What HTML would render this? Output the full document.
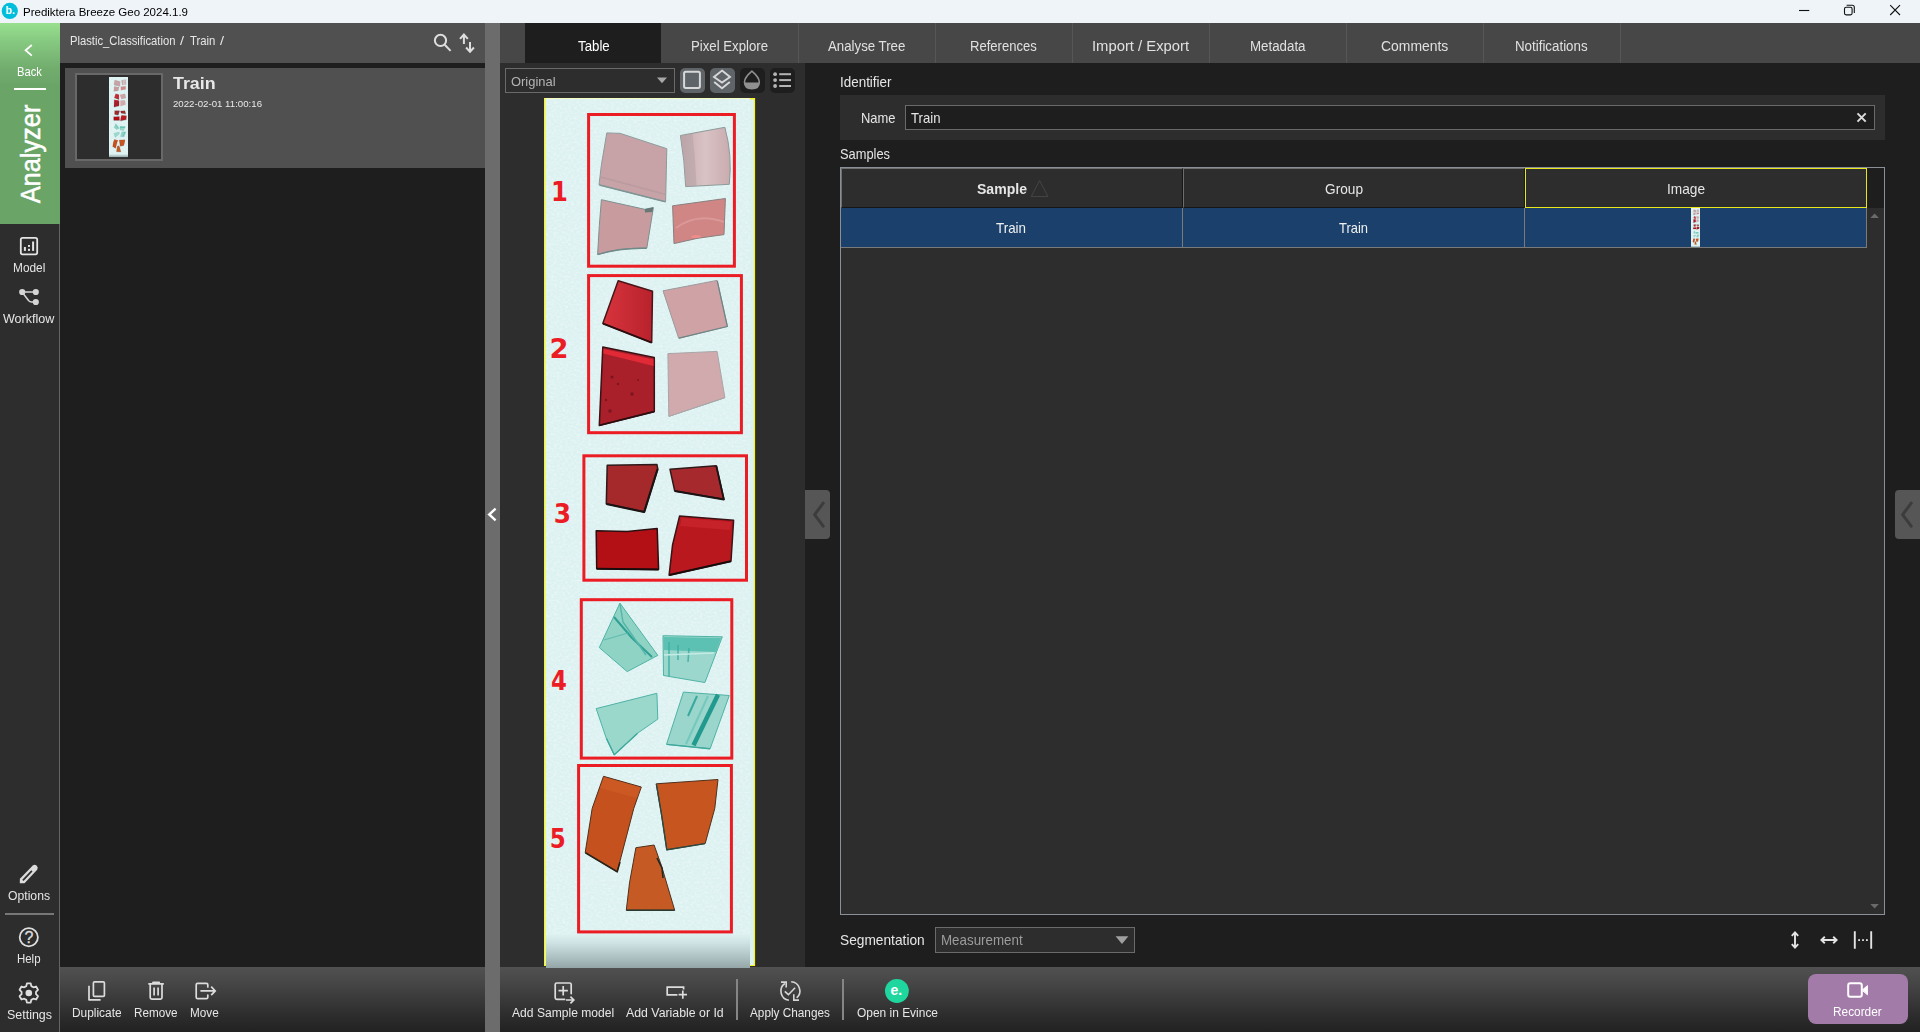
<!DOCTYPE html>
<html><head><meta charset="utf-8"><title>Prediktera Breeze Geo 2024.1.9</title>
<style>
*{box-sizing:border-box;margin:0;padding:0}
html,body{width:1920px;height:1032px;overflow:hidden;background:#1e1e1e;font-family:"Liberation Sans","DejaVu Sans",sans-serif;font-size:13px;color:#e6e6e6}
.a{position:absolute}
.tx{position:absolute;white-space:pre;transform-origin:0 50%;display:block}
svg{position:absolute;overflow:visible}
#titlebar{left:0;top:0;width:1920px;height:23px;background:#eff4f9}
#sidebar{left:0;top:23px;width:60px;height:1009px;background:#2d2d2d;border-right:1px solid #646464}
#green{left:0;top:23px;width:60px;height:201px;background:linear-gradient(#98e08f 0,#86c981 18px,#72ad6e 45px,#6ba467 62px,#6ba467 100%)}
#leftpanel{left:60px;top:23px;width:425px;height:1009px;background:#1e1e1e}
#crumb{left:60px;top:23px;width:425px;height:40px;background:#505050}
#item{left:65px;top:68px;width:420px;height:100px;background:#505050}
#thumb{left:75px;top:73px;width:88px;height:88px;background:#2d2d2d;border:2px solid #686868}
.tbar{background:linear-gradient(#515151 0,#464646 25%,#393939 50%,#2b2b2b 78%,#222 100%)}
#lbar{left:60px;top:967px;width:425px;height:65px}
#split{left:485px;top:23px;width:15px;height:1009px;background:#6c6c6c}
#tabs{left:500px;top:23px;width:1420px;height:40px;background:#474747}
.tabsep{top:23px;width:1px;height:40px;background:#565656}
#tabact{left:525px;top:23px;width:136px;height:40px;background:#1e1e1e}
#imgpane{left:500px;top:63px;width:305px;height:904px;background:#2d2d2d}
#right{left:805px;top:63px;width:1115px;height:904px;background:#1e1e1e}
#bbar{left:500px;top:967px;width:1420px;height:65px}
.dd{border:1px solid #6a6a6a;background:#2d2d2d}
.ibtn{top:68px;width:25px;height:25px;border-radius:5px}
#identbox{left:840px;top:95px;width:1045px;height:45px;background:#2d2d2d}
#nameinp{left:905px;top:105px;width:970px;height:25px;background:#1e1e1e;border:1px solid #6a6a6a}
#table{left:840px;top:167px;width:1045px;height:748px;background:#2d2d2d;border:1px solid #8a8f98}
.hcell{top:168px;height:40px;background:#2d2d2d;border-top:1px solid #6e6e6e;border-left:1px solid #6e6e6e;border-right:1px solid #161616;border-bottom:1px solid #161616}
.rcell{top:208px;height:40px;background:#1b406b;border-right:1px solid #7a7a7a;border-bottom:1px solid #7a7a7a}
#recorder{left:1808px;top:974px;width:100px;height:50px;border-radius:8px;background:#a27ba8}
.handle{background:#565656;border-radius:3px}
</style></head><body>
<div class="a" id="titlebar"></div>
<div class="a" id="sidebar"></div>
<div class="a" id="green"></div>
<div class="a" id="leftpanel"></div>
<div class="a" id="crumb"></div>
<div class="a" id="item"></div>
<div class="a" id="thumb"></div>
<div class="a tbar" id="lbar"></div>
<div class="a" id="split"></div>
<div class="a" id="tabs"></div>
<div class="a" id="tabact"></div>
<div class="a tabsep" style="left:798px"></div><div class="a tabsep" style="left:935px"></div><div class="a tabsep" style="left:1072px"></div><div class="a tabsep" style="left:1209px"></div><div class="a tabsep" style="left:1346px"></div><div class="a tabsep" style="left:1483px"></div><div class="a tabsep" style="left:1620px"></div>
<div class="a" id="imgpane"></div>
<div class="a" id="right"></div>
<div class="a tbar" id="bbar"></div>
<!-- image pane controls -->
<div class="a dd" style="left:505px;top:68px;width:170px;height:25px"></div>
<div class="a ibtn" style="left:680px;background:#5f6468"></div>
<div class="a ibtn" style="left:710px;background:#5f6468"></div>
<div class="a ibtn" style="left:740px;background:#1e1e1e"></div>
<div class="a ibtn" style="left:770px;background:#1e1e1e"></div>
<!-- right pane -->
<div class="a" id="identbox"></div>
<div class="a" id="nameinp"></div>
<div class="a" id="table"></div>
<div class="a" style="left:1867px;top:168px;width:17px;height:40px;background:#1e1e1e"></div>
<div class="a hcell" style="left:841px;width:342px"></div>
<div class="a hcell" style="left:1183px;width:342px"></div>
<div class="a" style="left:1525px;top:168px;width:342px;height:40px;background:#2d2d2d;border:1px solid #e6e61a"></div>
<div class="a rcell" style="left:841px;width:342px"></div>
<div class="a rcell" style="left:1183px;width:342px"></div>
<div class="a rcell" style="left:1525px;width:342px"></div>
<div class="a dd" style="left:935px;top:927px;width:200px;height:26px;background:#2d2d2d"></div>
<div class="a" id="recorder"></div>
<div class="a handle" style="left:805px;top:490px;width:25px;height:49px;border-radius:0 4px 4px 0"></div>
<div class="a handle" style="left:1895px;top:490px;width:25px;height:49px;border-radius:4px 0 0 4px"></div>
<!-- toolbar separators -->
<div class="a" style="left:736px;top:979px;width:2px;height:41px;background:#858585"></div>
<div class="a" style="left:842px;top:979px;width:2px;height:41px;background:#858585"></div>
<!-- sidebar lines -->
<div class="a" style="left:14px;top:88px;width:32px;height:2px;background:#fff"></div>
<div class="a" style="left:5px;top:913px;width:49px;height:2px;background:#777"></div>
<svg style="left:0;top:0" width="1920" height="1032" viewBox="0 0 1920 1032" fill="none" stroke-linecap="round" stroke-linejoin="round">
<!-- title bar -->
<circle cx="9.8" cy="10.9" r="8.1" fill="#00bedb"/>
<text x="5.6" y="14.2" font-family="'Liberation Sans',sans-serif" font-weight="700" font-size="10.5" fill="#fff" stroke="none">b.</text>
<g stroke="#111" stroke-width="1.1" stroke-linecap="butt">
<path d="M1799 10.5H1809.3"/>
<rect x="1844.5" y="7.3" width="7.6" height="7.6" rx="1.6"/>
<path d="M1846.6 5.2H1852.3Q1854.3 5.2 1854.3 7.2V12.9"/>
<path d="M1890.2 5.2L1900 15M1900 5.2L1890.2 15"/>
</g>
<!-- sidebar: back chevron -->
<path d="M31.8 45L25.6 50.3L31.8 55.6" stroke="#fff" stroke-width="1.8" stroke-linecap="butt" stroke-linejoin="miter"/>
<!-- model icon -->
<g stroke="#e4e4e4" stroke-width="1.8">
<rect x="20.8" y="237.9" width="16.4" height="16.4" rx="1.8"/>
</g>
<g fill="#e4e4e4" stroke="none">
<rect x="23.9" y="247" width="2" height="3.9"/><rect x="28" y="245" width="2" height="1.9"/><rect x="28" y="248.8" width="2" height="2.1"/><rect x="32.1" y="241.5" width="2" height="9.4"/>
</g>
<!-- workflow icon -->
<g stroke="#d4d4d4" stroke-width="1.5"><path d="M22 292H35.8M22 292L28.5 300.5Q29.8 302 31.5 302H35.8"/></g>
<g fill="#d4d4d4" stroke="none"><circle cx="22.2" cy="292" r="3.1"/><circle cx="35.8" cy="292" r="3.1"/><circle cx="35.8" cy="302" r="3.1"/></g>
<!-- options pencil -->
<path d="M19.8 883.2L19.9 878.8L32.8 865.5A3.1 3.1 0 0 1 37.2 869.7L24.5 883.2Z" fill="#dcdcdc" stroke="none"/>
<path d="M22.9 880.3L31.9 870.9" stroke="#2d2d2d" stroke-width="1.7" stroke-linecap="butt"/>
<!-- help -->
<circle cx="28.8" cy="937.3" r="9.1" stroke="#dedede" stroke-width="1.8"/>
<text x="28.9" y="942.9" text-anchor="middle" font-family="'Liberation Sans',sans-serif" font-weight="400" font-size="16" fill="#dedede" stroke="#dedede" stroke-width="0.3">?</text>
<!-- settings gear -->
<g transform="translate(28.8 993)">
<path stroke="#dedede" stroke-width="1.8" d="M-1.9 -9.6H1.9L2.5 -6.9L4.6 -5.7L7.3 -6.5L9.2 -3.2L7.2 -1.2V1.2L9.2 3.2L7.3 6.5L4.6 5.7L2.5 6.9L1.9 9.6H-1.9L-2.5 6.9L-4.6 5.7L-7.3 6.5L-9.2 3.2L-7.2 1.2V-1.2L-9.2 -3.2L-7.3 -6.5L-4.6 -5.7L-2.5 -6.9Z"/>
<circle r="3.3" fill="#dedede" stroke="none"/>
</g>
<!-- crumb icons -->
<g stroke="#dedede" stroke-width="2"><circle cx="440.5" cy="40.4" r="5.6"/><path d="M444.7 44.8L450.6 50.9" stroke-linecap="butt"/></g>
<g stroke="#dedede" stroke-width="2" stroke-linecap="butt" stroke-linejoin="miter"><path d="M463.9 44V34.8M460 38.9L463.9 34.6L467.8 38.9M470 42V51.6M466.1 47.5L470 51.8L473.9 47.5"/></g>
<!-- left toolbar: duplicate, remove, move -->
<g stroke="#dcdcdc" stroke-width="1.7">
<rect x="93.4" y="981.8" width="11" height="14.6" rx="1.2"/><path d="M89 985.8V999.8H100.6" stroke-linecap="butt"/>
<path d="M148.3 983.8H163.8M153 983.6V982.3H159.2V983.6" stroke-linecap="butt"/><path d="M150.2 984V997.6Q150.2 999.2 151.8 999.2H160.4Q162 999.2 162 997.6V984"/><path d="M154.1 987.6V995.4M158.1 987.6V995.4" stroke-linecap="butt"/>
<path d="M207.8 987V984.8Q207.8 983.4 206.4 983.4H197.6Q196.2 983.4 196.2 984.8V997.2Q196.2 998.6 197.6 998.6H206.4Q207.8 998.6 207.8 997.2V995"/><path d="M200.4 990.9H214.5M211.2 986.7L215.2 990.9L211.2 995.1" stroke-linecap="butt" stroke-linejoin="miter"/>
</g>
<!-- splitter chevron -->
<path d="M495.6 508.6L489.2 514.5L495.6 520.4" stroke="#fff" stroke-width="2.4" stroke-linecap="butt" stroke-linejoin="miter"/>
<!-- handle chevrons -->
<path d="M823.2 503.2L814.6 514.7L823.2 526.2" stroke="#3c3c3c" stroke-width="3"/>
<path d="M1911.2 503.2L1902.6 514.7L1911.2 526.2" stroke="#3c3c3c" stroke-width="3"/>
<!-- image pane buttons -->
<path d="M657 77.6H667L662 83.2Z" fill="#a8a8a8" stroke="none"/>
<rect x="684.1" y="71.7" width="15.8" height="16.2" rx="1.6" stroke="#d8d8d8" stroke-width="2"/>
<g stroke="#d8d8d8" stroke-width="1.9" stroke-linejoin="miter" stroke-linecap="butt"><path d="M722 70.6L730 77L722 82.6L714 77Z"/><path d="M714.2 82L722 88.2L729.8 82"/></g>
<path d="M751.9 71.2Q759.3 77.6 759.3 82Q759.3 88.6 751.9 88.6Q744.5 88.6 744.5 82Q744.5 77.6 751.9 71.2Z" stroke="#909090" stroke-width="1.6"/>
<path d="M744.6 82.4H759.2Q759.2 88.6 751.9 88.6Q744.6 88.6 744.6 82.4Z" fill="#909090" stroke="none"/>
<g fill="#b4b4b4" stroke="none"><circle cx="775.1" cy="74.2" r="1.9"/><circle cx="775.1" cy="80.1" r="1.9"/><circle cx="775.1" cy="86" r="1.9"/><rect x="779.2" y="73.2" width="11.8" height="2"/><rect x="779.2" y="79.1" width="11.8" height="2"/><rect x="779.2" y="85" width="11.8" height="2"/></g>
<!-- name clear x -->
<path d="M1857.5 113.4L1865.7 121.6M1865.7 113.4L1857.5 121.6" stroke="#dcdcdc" stroke-width="2" stroke-linecap="butt"/>
<!-- sort triangle -->
<path d="M1031.4 196.2L1039.6 180.6L1047.8 196.2Z" stroke="#454545" stroke-width="1"/>
<!-- scrollbar arrows -->
<path d="M1870.3 218L1874.6 213.6L1878.9 218Z" fill="#6a6a6a" stroke="none"/>
<path d="M1870.3 904L1874.6 908.4L1878.9 904Z" fill="#6a6a6a" stroke="none"/>
<!-- measurement arrow -->
<path d="M1115.6 936.2H1128.4L1122 944Z" fill="#a0a0a0" stroke="none"/>
<!-- resize icons -->
<g stroke="#e4e4e4" stroke-width="1.9" stroke-linecap="butt" stroke-linejoin="miter">
<path d="M1795 933V947M1791.8 935.8L1795 932.4L1798.2 935.8M1791.8 944.2L1795 947.6L1798.2 944.2"/>
<path d="M1822 940H1836M1824.8 936.8L1821.4 940L1824.8 943.2M1833.2 936.8L1836.6 940L1833.2 943.2"/>
<path d="M1854.8 931.2V948.8M1871.2 931.2V948.8"/>
</g>
<g fill="#e0e0e0" stroke="none"><rect x="1858.2" y="939.2" width="1.8" height="1.8"/><rect x="1862.1" y="939.2" width="1.8" height="1.8"/><rect x="1866" y="939.2" width="1.8" height="1.8"/></g>
<!-- bottom toolbar -->
<g stroke="#dcdcdc" stroke-width="1.7">
<path d="M564.6 999.4H556.8Q555.2 999.4 555.2 997.8V984.6Q555.2 983 556.8 983H569.6Q571.2 983 571.2 984.6V993.6"/><path d="M563.2 986V995.4M558.5 990.7H567.9" stroke-linecap="butt"/><path d="M566 1000H573M570.4 996.6L573.8 1000L570.4 1003.4" stroke-linecap="butt" stroke-linejoin="miter"/>
<path d="M677.4 994.8H667.2V987.2H683.6V989.6" stroke-linecap="butt" stroke-linejoin="miter"/><path d="M682.8 990.4V998.8M678.6 994.6H687" stroke-linecap="butt"/>
</g>
<g stroke="#d6d6d6" stroke-width="1.6" stroke-linecap="butt" stroke-linejoin="miter">
<path d="M788.9 1000.2A9.2 9.2 0 0 1 784.9 983.5"/><path d="M781 982.1H786.2V987.6"/>
<path d="M791.2 981.8A9.2 9.2 0 0 1 796.7 997.9"/><path d="M793.8 994.3V1000.1H799"/>
<path d="M784.8 991.3L788.4 994.7L795.1 987.8"/>
</g>
<circle cx="896.9" cy="991" r="11.9" fill="#1fd69e"/>
<text x="890.4" y="995.4" font-family="'Liberation Sans',sans-serif" font-weight="700" font-size="14" fill="#fff" stroke="none">e.</text>
<!-- recorder camera -->
<g stroke="#fff" stroke-width="2"><rect x="1848.2" y="983.2" width="13.6" height="13.6" rx="2"/></g>
<path d="M1862.4 990L1867.4 985.6V994.4Z" fill="#fff" stroke="#fff" stroke-width="1"/>
</svg>

<svg style="left:0;top:0" width="1920" height="1032" viewBox="0 0 1920 1032">
<defs>
<linearGradient id="gbot" x1="0" y1="0" x2="0" y2="1"><stop offset="0" stop-color="#dff2f2"/><stop offset="0.25" stop-color="#cfe3e4"/><stop offset="0.6" stop-color="#b4c8ca"/><stop offset="1" stop-color="#94a6a8"/></linearGradient>
<linearGradient id="gp1" x1="0" y1="0" x2="1" y2="0"><stop offset="0" stop-color="#c9a9ac"/><stop offset="0.5" stop-color="#d9c3c5"/><stop offset="1" stop-color="#c9abae"/></linearGradient>
<linearGradient id="gr1" x1="0" y1="0" x2="1" y2="0"><stop offset="0" stop-color="#d8343d"/><stop offset="1" stop-color="#b8222c"/></linearGradient>
<filter id="noise" x="0" y="0" width="1" height="1"><feTurbulence type="fractalNoise" baseFrequency="0.35 0.5" numOctaves="2" seed="7" result="n"/><feColorMatrix in="n" type="matrix" values="0 0 0 0 1  0 0 0 0 1  0 0 0 0 1  1.6 0 0 0 -0.62"/></filter>
<clipPath id="imgclip"><rect x="543" y="98" width="213" height="870"/></clipPath>
</defs>
<g clip-path="url(#imgclip)">
<rect x="544" y="98" width="211" height="868" fill="#dcf1f1"/>
<rect x="544" y="98" width="211" height="1" fill="#f3fac0"/>
<rect x="544" y="98" width="1.3" height="868" fill="#f6f61a"/>
<rect x="753.8" y="98" width="1.3" height="868" fill="#f6f61a"/>
<rect x="544" y="965" width="2" height="1" fill="#f6f61a"/><rect x="750" y="965" width="5" height="1" fill="#f6f61a"/><rect x="750" y="98" width="5" height="1.4" fill="#f6f61a"/>
<g>
<rect x="546" y="99" width="204" height="869" fill="#dcf1f1"/>
<rect x="546" y="99" width="204" height="835" fill="#fff" filter="url(#noise)" opacity=".55"/>
<rect x="546" y="934" width="204" height="34" fill="url(#gbot)"/>
<g stroke-linejoin="round">
<!-- box1 -->
<path d="M606.8 132.9 L620.3 133.4 L666.8 148.7 L665.6 201.8 L599 184.8 L601.4 164.8Z" fill="#c7a3a7" stroke="#8d9a9a" stroke-width="1"/>
<path d="M680.4 135.5 L724.9 127.3 Q732.5 155 729.3 184.3 L685.7 186.6 Q684.5 160 680.4 135.5Z" fill="url(#gp1)" stroke="#8d9a9a" stroke-width="1"/>
<path d="M601.4 199.7 L644.7 209.3 L653.4 207.5 L646.8 248.2 Q620 247.5 597.6 254.6 L599.3 225.8Z" fill="#c89c9f" stroke="#7f8f8f" stroke-width="1"/>
<path d="M672.6 205.8 L725.4 198.5 L724 234.6 L697 238.4 L674 243.6Z" fill="#d08685" stroke="#8a8080" stroke-width="1"/>
<path d="M676 228 Q697 212 724 222" fill="none" stroke="#e0a0a0" stroke-width="2" opacity=".7"/>
<path d="M600.6 177 L665.7 194.5" fill="none" stroke="#b4999d" stroke-width="1.6" opacity=".7"/>
<path d="M680.6 136 L692.5 133.6 Q695.5 160 696.5 186 L685.8 186.4 Q684.5 160 680.6 136Z" fill="#b3a3a6" opacity=".55"/>
<path d="M599.4 185 L665.4 201.8" fill="none" stroke="#7d9694" stroke-width="1.4"/>
<path d="M598 254.3 Q620 247.6 646.6 248.3" fill="none" stroke="#6f8a88" stroke-width="1.4"/>
<ellipse cx="696" cy="236.5" rx="5" ry="1.6" fill="#f58c8c" opacity=".8"/>
<path d="M644.7 209.3 L653.2 207.6 L652.4 212 L645 212.5Z" fill="#4f6f6c" opacity=".8"/>
<!-- box2 -->
<path d="M618.2 280.7 L652.5 291.2 L651.7 342.6 L602.8 323.4Z" fill="url(#gr1)" stroke="#4a1518" stroke-width="1.5"/>
<path d="M663 290.8 L717.1 280.4 L727.5 326.4 L678.7 338.3Z" fill="#cfa2a6" stroke="#9a9a9c" stroke-width="1"/>
<path d="M602.8 347 L654.3 357.5 L654.3 411.5 L599.3 425.5Z" fill="#a91f2a" stroke="#3c1216" stroke-width="1.5"/>
<path d="M603.5 349 L653.5 359.5 L653.5 366 L603.3 353.5Z" fill="#e22a36"/>
<g fill="#6a1218" opacity=".7"><circle cx="612" cy="377" r="1.6"/><circle cx="618" cy="384" r="1.2"/><circle cx="632" cy="394" r="1.8"/><circle cx="610" cy="411" r="1.8"/><circle cx="638" cy="380" r="1"/><circle cx="606" cy="400" r="1.2"/></g>
<path d="M603 323.6 L651.6 342.6" fill="none" stroke="#2c0d10" stroke-width="1.8"/>
<path d="M599.6 425.3 L654.2 411.6" fill="none" stroke="#2c0d10" stroke-width="1.6"/>
<path d="M679 338.2 L727.3 326.5 L717.3 281" fill="none" stroke="#6f8583" stroke-width="1.2"/>
<path d="M669 416.2 L724.7 397.6" fill="none" stroke="#8fa09f" stroke-width="1.2"/>
<path d="M667.9 353.6 L717.1 351.4 L724.9 397.6 L668.8 416.4Z" fill="#d1aaad" stroke="#a9a6a8" stroke-width="1"/>
<!-- box3 -->
<path d="M607.2 465.3 L656.9 464.4 L657.8 468.8 L644.3 511.9 L606.3 503.7Z" fill="#a5282b" stroke="#2e1a1a" stroke-width="1.5"/>
<path d="M670 469.3 L716.2 465.8 L724 499.3 L674.7 490.9Z" fill="#a62a2d" stroke="#2e1a1a" stroke-width="1.5"/>
<path d="M596.2 530.7 L627.2 531.6 L657.2 528.6 L658.6 569.4 L596.7 568.7Z" fill="#b31016" stroke="#2a1012" stroke-width="1.5"/>
<path d="M679.6 515.9 L733.6 520.3 L731 561.2 L669.1 575.2 L672.6 544.7Z" fill="#b9181f" stroke="#3a1416" stroke-width="1.5"/>
<path d="M606.4 504 L644.2 512 L657.6 469" fill="none" stroke="#1c1414" stroke-width="2.2"/>
<path d="M674.8 491 L723.8 499.5 L716.4 466" fill="none" stroke="#1c1414" stroke-width="1.8"/>
<path d="M596.8 568.8 L658.5 569.5" fill="none" stroke="#1a0c0d" stroke-width="2"/>
<path d="M669.3 575 L730.8 561.3" fill="none" stroke="#1a0c0d" stroke-width="2"/>
<path d="M682 518 L731 522 L730 530 L680 526Z" fill="#cf2a30" opacity=".6"/>
<!-- box4 -->
<path d="M619.9 603.1 L657.8 655.4 L627.2 671.6 L599.3 647.6Z" fill="#8fd3c5" stroke="#4fb3a6" stroke-width="1"/>
<path d="M614 617 L632 638 L652 657" fill="none" stroke="#2fa094" stroke-width="2"/>
<path d="M663 635.7 L722.3 636.8 L704.9 682.5 L663.5 675.5Z" fill="#9bd7cc" stroke="#4fb3a6" stroke-width="1"/>
<path d="M663.5 637 L721 638 L716 652 L664 650Z" fill="#5cc0b3"/>
<path d="M596.2 708.6 L656.9 693.3 L657.8 719.1 L637.7 733.1 L614.1 754.9 L606.3 738.3Z" fill="#9bd8cc" stroke="#4fb3a6" stroke-width="1"/>
<path d="M683.4 692.1 L729.3 695.5 L710.1 748.8 L666.5 744.4Z" fill="#9ad6cb" stroke="#4fb3a6" stroke-width="1"/>
<path d="M718 694.7 L693.5 745.3" fill="none" stroke="#22998f" stroke-width="4.5"/>
<path d="M697 696 L688 716" fill="none" stroke="#3aa89d" stroke-width="2"/>
<path d="M620 604 L623 622 L646 655" fill="none" stroke="#55b5a9" stroke-width="1.4"/>
<path d="M604 640 L628 633" fill="none" stroke="#55b5a9" stroke-width="1.2" opacity=".8"/>
<path d="M669 642 L669 676 M678 645 L678 660 M689 648 L688 662" fill="none" stroke="#3eaea2" stroke-width="1.6" opacity=".85"/>
<path d="M664 655 L714 653" fill="none" stroke="#c4ece5" stroke-width="1.6"/>
<path d="M606.5 738.5 L614.3 754.7 L637.6 733.2" fill="none" stroke="#3ea99d" stroke-width="1.4"/>
<path d="M666.8 744.4 L710 748.7" fill="none" stroke="#3ea99d" stroke-width="1.4"/>
<path d="M708 696 L686 744" fill="none" stroke="#6cc4b9" stroke-width="2" opacity=".8"/>
<!-- box5 -->
<path d="M603.5 776.3 L641.3 787 L633.8 808.3 L617.2 871.8 L585.2 852.6 L592.2 808.3Z" fill="#c5521e" stroke="#50301c" stroke-width="1"/>
<path d="M656.2 783.8 L718 779.5 L714.8 808.3 L705.2 843.5 L666.8 849.9 L661.5 814.7Z" fill="#c65520" stroke="#50301c" stroke-width="1"/>
<path d="M635.9 847.7 L654.1 845 L661.5 865.9 L674.7 910.2 L626.3 910.2 L629.5 882.9Z" fill="#c65a24" stroke="#50301c" stroke-width="1"/>
<path d="M585.4 852.8 L617.2 871.8 L620 862" fill="none" stroke="#2a2418" stroke-width="1.6"/>
<path d="M656.4 784 L661.6 814.8 L666.8 849.8 L705 843.6" fill="none" stroke="#2c4a40" stroke-width="1.4"/>
<path d="M626.4 910.2 L674.6 910.2" fill="none" stroke="#2a3a30" stroke-width="1.6"/>
<path d="M657 858 L662 868 L663 878" fill="none" stroke="#1f2a22" stroke-width="1.6"/>
<path d="M604 777 L640.8 787.4 L637 798 L600 788Z" fill="#d4602a" opacity=".5"/>
</g>
</g>
<g fill="none" stroke="#ec1c24" stroke-width="3">
<rect x="588.6" y="114.5" width="145.8" height="151.7"/>
<rect x="588.6" y="275.6" width="152.8" height="157.1"/>
<rect x="583.9" y="455.8" width="162.6" height="124.4"/>
<rect x="581.3" y="599.7" width="150.5" height="158.4"/>
<rect x="578.6" y="765.5" width="152.8" height="166.4"/>
</g>

<g font-family="'DejaVu Sans Condensed','DejaVu Sans','Liberation Sans',sans-serif" font-weight="700" font-size="26.5" fill="#ec1c24">
<text x="551" y="200.5" textLength="16.9" lengthAdjust="spacingAndGlyphs">1</text>
<text x="549.6" y="358" textLength="19" lengthAdjust="spacingAndGlyphs">2</text>
<text x="553.8" y="523.4" textLength="17.3" lengthAdjust="spacingAndGlyphs">3</text>
<text x="551" y="690.3" textLength="15.9" lengthAdjust="spacingAndGlyphs">4</text>
<text x="549.7" y="847.7" textLength="16" lengthAdjust="spacingAndGlyphs">5</text>
</g>
</g>
<g transform="translate(109 77) scale(0.0931 0.0921) translate(-546 -99)">
<rect x="546" y="99" width="204" height="869" fill="#dcf1f1"/>
<rect x="546" y="99" width="204" height="835" fill="#fff" filter="url(#noise)" opacity=".55"/>
<rect x="546" y="934" width="204" height="34" fill="url(#gbot)"/>
<g stroke-linejoin="round">
<!-- box1 -->
<path d="M606.8 132.9 L620.3 133.4 L666.8 148.7 L665.6 201.8 L599 184.8 L601.4 164.8Z" fill="#c7a3a7" stroke="#8d9a9a" stroke-width="1"/>
<path d="M680.4 135.5 L724.9 127.3 Q732.5 155 729.3 184.3 L685.7 186.6 Q684.5 160 680.4 135.5Z" fill="url(#gp1)" stroke="#8d9a9a" stroke-width="1"/>
<path d="M601.4 199.7 L644.7 209.3 L653.4 207.5 L646.8 248.2 Q620 247.5 597.6 254.6 L599.3 225.8Z" fill="#c89c9f" stroke="#7f8f8f" stroke-width="1"/>
<path d="M672.6 205.8 L725.4 198.5 L724 234.6 L697 238.4 L674 243.6Z" fill="#d08685" stroke="#8a8080" stroke-width="1"/>
<path d="M676 228 Q697 212 724 222" fill="none" stroke="#e0a0a0" stroke-width="2" opacity=".7"/>
<path d="M600.6 177 L665.7 194.5" fill="none" stroke="#b4999d" stroke-width="1.6" opacity=".7"/>
<path d="M680.6 136 L692.5 133.6 Q695.5 160 696.5 186 L685.8 186.4 Q684.5 160 680.6 136Z" fill="#b3a3a6" opacity=".55"/>
<path d="M599.4 185 L665.4 201.8" fill="none" stroke="#7d9694" stroke-width="1.4"/>
<path d="M598 254.3 Q620 247.6 646.6 248.3" fill="none" stroke="#6f8a88" stroke-width="1.4"/>
<ellipse cx="696" cy="236.5" rx="5" ry="1.6" fill="#f58c8c" opacity=".8"/>
<path d="M644.7 209.3 L653.2 207.6 L652.4 212 L645 212.5Z" fill="#4f6f6c" opacity=".8"/>
<!-- box2 -->
<path d="M618.2 280.7 L652.5 291.2 L651.7 342.6 L602.8 323.4Z" fill="url(#gr1)" stroke="#4a1518" stroke-width="1.5"/>
<path d="M663 290.8 L717.1 280.4 L727.5 326.4 L678.7 338.3Z" fill="#cfa2a6" stroke="#9a9a9c" stroke-width="1"/>
<path d="M602.8 347 L654.3 357.5 L654.3 411.5 L599.3 425.5Z" fill="#a91f2a" stroke="#3c1216" stroke-width="1.5"/>
<path d="M603.5 349 L653.5 359.5 L653.5 366 L603.3 353.5Z" fill="#e22a36"/>
<g fill="#6a1218" opacity=".7"><circle cx="612" cy="377" r="1.6"/><circle cx="618" cy="384" r="1.2"/><circle cx="632" cy="394" r="1.8"/><circle cx="610" cy="411" r="1.8"/><circle cx="638" cy="380" r="1"/><circle cx="606" cy="400" r="1.2"/></g>
<path d="M603 323.6 L651.6 342.6" fill="none" stroke="#2c0d10" stroke-width="1.8"/>
<path d="M599.6 425.3 L654.2 411.6" fill="none" stroke="#2c0d10" stroke-width="1.6"/>
<path d="M679 338.2 L727.3 326.5 L717.3 281" fill="none" stroke="#6f8583" stroke-width="1.2"/>
<path d="M669 416.2 L724.7 397.6" fill="none" stroke="#8fa09f" stroke-width="1.2"/>
<path d="M667.9 353.6 L717.1 351.4 L724.9 397.6 L668.8 416.4Z" fill="#d1aaad" stroke="#a9a6a8" stroke-width="1"/>
<!-- box3 -->
<path d="M607.2 465.3 L656.9 464.4 L657.8 468.8 L644.3 511.9 L606.3 503.7Z" fill="#a5282b" stroke="#2e1a1a" stroke-width="1.5"/>
<path d="M670 469.3 L716.2 465.8 L724 499.3 L674.7 490.9Z" fill="#a62a2d" stroke="#2e1a1a" stroke-width="1.5"/>
<path d="M596.2 530.7 L627.2 531.6 L657.2 528.6 L658.6 569.4 L596.7 568.7Z" fill="#b31016" stroke="#2a1012" stroke-width="1.5"/>
<path d="M679.6 515.9 L733.6 520.3 L731 561.2 L669.1 575.2 L672.6 544.7Z" fill="#b9181f" stroke="#3a1416" stroke-width="1.5"/>
<path d="M606.4 504 L644.2 512 L657.6 469" fill="none" stroke="#1c1414" stroke-width="2.2"/>
<path d="M674.8 491 L723.8 499.5 L716.4 466" fill="none" stroke="#1c1414" stroke-width="1.8"/>
<path d="M596.8 568.8 L658.5 569.5" fill="none" stroke="#1a0c0d" stroke-width="2"/>
<path d="M669.3 575 L730.8 561.3" fill="none" stroke="#1a0c0d" stroke-width="2"/>
<path d="M682 518 L731 522 L730 530 L680 526Z" fill="#cf2a30" opacity=".6"/>
<!-- box4 -->
<path d="M619.9 603.1 L657.8 655.4 L627.2 671.6 L599.3 647.6Z" fill="#8fd3c5" stroke="#4fb3a6" stroke-width="1"/>
<path d="M614 617 L632 638 L652 657" fill="none" stroke="#2fa094" stroke-width="2"/>
<path d="M663 635.7 L722.3 636.8 L704.9 682.5 L663.5 675.5Z" fill="#9bd7cc" stroke="#4fb3a6" stroke-width="1"/>
<path d="M663.5 637 L721 638 L716 652 L664 650Z" fill="#5cc0b3"/>
<path d="M596.2 708.6 L656.9 693.3 L657.8 719.1 L637.7 733.1 L614.1 754.9 L606.3 738.3Z" fill="#9bd8cc" stroke="#4fb3a6" stroke-width="1"/>
<path d="M683.4 692.1 L729.3 695.5 L710.1 748.8 L666.5 744.4Z" fill="#9ad6cb" stroke="#4fb3a6" stroke-width="1"/>
<path d="M718 694.7 L693.5 745.3" fill="none" stroke="#22998f" stroke-width="4.5"/>
<path d="M697 696 L688 716" fill="none" stroke="#3aa89d" stroke-width="2"/>
<path d="M620 604 L623 622 L646 655" fill="none" stroke="#55b5a9" stroke-width="1.4"/>
<path d="M604 640 L628 633" fill="none" stroke="#55b5a9" stroke-width="1.2" opacity=".8"/>
<path d="M669 642 L669 676 M678 645 L678 660 M689 648 L688 662" fill="none" stroke="#3eaea2" stroke-width="1.6" opacity=".85"/>
<path d="M664 655 L714 653" fill="none" stroke="#c4ece5" stroke-width="1.6"/>
<path d="M606.5 738.5 L614.3 754.7 L637.6 733.2" fill="none" stroke="#3ea99d" stroke-width="1.4"/>
<path d="M666.8 744.4 L710 748.7" fill="none" stroke="#3ea99d" stroke-width="1.4"/>
<path d="M708 696 L686 744" fill="none" stroke="#6cc4b9" stroke-width="2" opacity=".8"/>
<!-- box5 -->
<path d="M603.5 776.3 L641.3 787 L633.8 808.3 L617.2 871.8 L585.2 852.6 L592.2 808.3Z" fill="#c5521e" stroke="#50301c" stroke-width="1"/>
<path d="M656.2 783.8 L718 779.5 L714.8 808.3 L705.2 843.5 L666.8 849.9 L661.5 814.7Z" fill="#c65520" stroke="#50301c" stroke-width="1"/>
<path d="M635.9 847.7 L654.1 845 L661.5 865.9 L674.7 910.2 L626.3 910.2 L629.5 882.9Z" fill="#c65a24" stroke="#50301c" stroke-width="1"/>
<path d="M585.4 852.8 L617.2 871.8 L620 862" fill="none" stroke="#2a2418" stroke-width="1.6"/>
<path d="M656.4 784 L661.6 814.8 L666.8 849.8 L705 843.6" fill="none" stroke="#2c4a40" stroke-width="1.4"/>
<path d="M626.4 910.2 L674.6 910.2" fill="none" stroke="#2a3a30" stroke-width="1.6"/>
<path d="M657 858 L662 868 L663 878" fill="none" stroke="#1f2a22" stroke-width="1.6"/>
<path d="M604 777 L640.8 787.4 L637 798 L600 788Z" fill="#d4602a" opacity=".5"/>
</g>
</g>
<g transform="translate(1691 208) scale(0.0441 0.0449) translate(-546 -99)">
<rect x="546" y="99" width="204" height="869" fill="#dcf1f1"/>
<rect x="546" y="99" width="204" height="835" fill="#fff" filter="url(#noise)" opacity=".55"/>
<rect x="546" y="934" width="204" height="34" fill="url(#gbot)"/>
<g stroke-linejoin="round">
<!-- box1 -->
<path d="M606.8 132.9 L620.3 133.4 L666.8 148.7 L665.6 201.8 L599 184.8 L601.4 164.8Z" fill="#c7a3a7" stroke="#8d9a9a" stroke-width="1"/>
<path d="M680.4 135.5 L724.9 127.3 Q732.5 155 729.3 184.3 L685.7 186.6 Q684.5 160 680.4 135.5Z" fill="url(#gp1)" stroke="#8d9a9a" stroke-width="1"/>
<path d="M601.4 199.7 L644.7 209.3 L653.4 207.5 L646.8 248.2 Q620 247.5 597.6 254.6 L599.3 225.8Z" fill="#c89c9f" stroke="#7f8f8f" stroke-width="1"/>
<path d="M672.6 205.8 L725.4 198.5 L724 234.6 L697 238.4 L674 243.6Z" fill="#d08685" stroke="#8a8080" stroke-width="1"/>
<path d="M676 228 Q697 212 724 222" fill="none" stroke="#e0a0a0" stroke-width="2" opacity=".7"/>
<path d="M600.6 177 L665.7 194.5" fill="none" stroke="#b4999d" stroke-width="1.6" opacity=".7"/>
<path d="M680.6 136 L692.5 133.6 Q695.5 160 696.5 186 L685.8 186.4 Q684.5 160 680.6 136Z" fill="#b3a3a6" opacity=".55"/>
<path d="M599.4 185 L665.4 201.8" fill="none" stroke="#7d9694" stroke-width="1.4"/>
<path d="M598 254.3 Q620 247.6 646.6 248.3" fill="none" stroke="#6f8a88" stroke-width="1.4"/>
<ellipse cx="696" cy="236.5" rx="5" ry="1.6" fill="#f58c8c" opacity=".8"/>
<path d="M644.7 209.3 L653.2 207.6 L652.4 212 L645 212.5Z" fill="#4f6f6c" opacity=".8"/>
<!-- box2 -->
<path d="M618.2 280.7 L652.5 291.2 L651.7 342.6 L602.8 323.4Z" fill="url(#gr1)" stroke="#4a1518" stroke-width="1.5"/>
<path d="M663 290.8 L717.1 280.4 L727.5 326.4 L678.7 338.3Z" fill="#cfa2a6" stroke="#9a9a9c" stroke-width="1"/>
<path d="M602.8 347 L654.3 357.5 L654.3 411.5 L599.3 425.5Z" fill="#a91f2a" stroke="#3c1216" stroke-width="1.5"/>
<path d="M603.5 349 L653.5 359.5 L653.5 366 L603.3 353.5Z" fill="#e22a36"/>
<g fill="#6a1218" opacity=".7"><circle cx="612" cy="377" r="1.6"/><circle cx="618" cy="384" r="1.2"/><circle cx="632" cy="394" r="1.8"/><circle cx="610" cy="411" r="1.8"/><circle cx="638" cy="380" r="1"/><circle cx="606" cy="400" r="1.2"/></g>
<path d="M603 323.6 L651.6 342.6" fill="none" stroke="#2c0d10" stroke-width="1.8"/>
<path d="M599.6 425.3 L654.2 411.6" fill="none" stroke="#2c0d10" stroke-width="1.6"/>
<path d="M679 338.2 L727.3 326.5 L717.3 281" fill="none" stroke="#6f8583" stroke-width="1.2"/>
<path d="M669 416.2 L724.7 397.6" fill="none" stroke="#8fa09f" stroke-width="1.2"/>
<path d="M667.9 353.6 L717.1 351.4 L724.9 397.6 L668.8 416.4Z" fill="#d1aaad" stroke="#a9a6a8" stroke-width="1"/>
<!-- box3 -->
<path d="M607.2 465.3 L656.9 464.4 L657.8 468.8 L644.3 511.9 L606.3 503.7Z" fill="#a5282b" stroke="#2e1a1a" stroke-width="1.5"/>
<path d="M670 469.3 L716.2 465.8 L724 499.3 L674.7 490.9Z" fill="#a62a2d" stroke="#2e1a1a" stroke-width="1.5"/>
<path d="M596.2 530.7 L627.2 531.6 L657.2 528.6 L658.6 569.4 L596.7 568.7Z" fill="#b31016" stroke="#2a1012" stroke-width="1.5"/>
<path d="M679.6 515.9 L733.6 520.3 L731 561.2 L669.1 575.2 L672.6 544.7Z" fill="#b9181f" stroke="#3a1416" stroke-width="1.5"/>
<path d="M606.4 504 L644.2 512 L657.6 469" fill="none" stroke="#1c1414" stroke-width="2.2"/>
<path d="M674.8 491 L723.8 499.5 L716.4 466" fill="none" stroke="#1c1414" stroke-width="1.8"/>
<path d="M596.8 568.8 L658.5 569.5" fill="none" stroke="#1a0c0d" stroke-width="2"/>
<path d="M669.3 575 L730.8 561.3" fill="none" stroke="#1a0c0d" stroke-width="2"/>
<path d="M682 518 L731 522 L730 530 L680 526Z" fill="#cf2a30" opacity=".6"/>
<!-- box4 -->
<path d="M619.9 603.1 L657.8 655.4 L627.2 671.6 L599.3 647.6Z" fill="#8fd3c5" stroke="#4fb3a6" stroke-width="1"/>
<path d="M614 617 L632 638 L652 657" fill="none" stroke="#2fa094" stroke-width="2"/>
<path d="M663 635.7 L722.3 636.8 L704.9 682.5 L663.5 675.5Z" fill="#9bd7cc" stroke="#4fb3a6" stroke-width="1"/>
<path d="M663.5 637 L721 638 L716 652 L664 650Z" fill="#5cc0b3"/>
<path d="M596.2 708.6 L656.9 693.3 L657.8 719.1 L637.7 733.1 L614.1 754.9 L606.3 738.3Z" fill="#9bd8cc" stroke="#4fb3a6" stroke-width="1"/>
<path d="M683.4 692.1 L729.3 695.5 L710.1 748.8 L666.5 744.4Z" fill="#9ad6cb" stroke="#4fb3a6" stroke-width="1"/>
<path d="M718 694.7 L693.5 745.3" fill="none" stroke="#22998f" stroke-width="4.5"/>
<path d="M697 696 L688 716" fill="none" stroke="#3aa89d" stroke-width="2"/>
<path d="M620 604 L623 622 L646 655" fill="none" stroke="#55b5a9" stroke-width="1.4"/>
<path d="M604 640 L628 633" fill="none" stroke="#55b5a9" stroke-width="1.2" opacity=".8"/>
<path d="M669 642 L669 676 M678 645 L678 660 M689 648 L688 662" fill="none" stroke="#3eaea2" stroke-width="1.6" opacity=".85"/>
<path d="M664 655 L714 653" fill="none" stroke="#c4ece5" stroke-width="1.6"/>
<path d="M606.5 738.5 L614.3 754.7 L637.6 733.2" fill="none" stroke="#3ea99d" stroke-width="1.4"/>
<path d="M666.8 744.4 L710 748.7" fill="none" stroke="#3ea99d" stroke-width="1.4"/>
<path d="M708 696 L686 744" fill="none" stroke="#6cc4b9" stroke-width="2" opacity=".8"/>
<!-- box5 -->
<path d="M603.5 776.3 L641.3 787 L633.8 808.3 L617.2 871.8 L585.2 852.6 L592.2 808.3Z" fill="#c5521e" stroke="#50301c" stroke-width="1"/>
<path d="M656.2 783.8 L718 779.5 L714.8 808.3 L705.2 843.5 L666.8 849.9 L661.5 814.7Z" fill="#c65520" stroke="#50301c" stroke-width="1"/>
<path d="M635.9 847.7 L654.1 845 L661.5 865.9 L674.7 910.2 L626.3 910.2 L629.5 882.9Z" fill="#c65a24" stroke="#50301c" stroke-width="1"/>
<path d="M585.4 852.8 L617.2 871.8 L620 862" fill="none" stroke="#2a2418" stroke-width="1.6"/>
<path d="M656.4 784 L661.6 814.8 L666.8 849.8 L705 843.6" fill="none" stroke="#2c4a40" stroke-width="1.4"/>
<path d="M626.4 910.2 L674.6 910.2" fill="none" stroke="#2a3a30" stroke-width="1.6"/>
<path d="M657 858 L662 868 L663 878" fill="none" stroke="#1f2a22" stroke-width="1.6"/>
<path d="M604 777 L640.8 787.4 L637 798 L600 788Z" fill="#d4602a" opacity=".5"/>
</g>
</g>
</svg>

<span class="tx" style="left:23.0px;top:6.0px;font-size:11.5px;line-height:12px;font-weight:400;color:#000;transform:scaleX(1.0004);">Prediktera Breeze Geo 2024.1.9</span>
<span class="tx" style="left:17.3px;top:65.0px;font-size:12px;line-height:14px;font-weight:400;color:#fff;transform:scaleX(0.9330);">Back</span>
<span class="tx" style="left:13.0px;top:261.0px;font-size:12px;line-height:14px;font-weight:400;color:#e6e6e6;transform:scaleX(0.9881);">Model</span>
<span class="tx" style="left:3.3px;top:312.0px;font-size:12px;line-height:14px;font-weight:400;color:#e6e6e6;transform:scaleX(1.0463);">Workflow</span>
<span class="tx" style="left:8.3px;top:889.0px;font-size:12px;line-height:14px;font-weight:400;color:#e6e6e6;transform:scaleX(1.0155);">Options</span>
<span class="tx" style="left:17.0px;top:952.0px;font-size:12px;line-height:14px;font-weight:400;color:#e6e6e6;transform:scaleX(0.9519);">Help</span>
<span class="tx" style="left:7.3px;top:1008.0px;font-size:12px;line-height:14px;font-weight:400;color:#e6e6e6;transform:scaleX(1.0378);">Settings</span>
<span class="tx" style="left:69.9px;top:33.0px;font-size:13px;line-height:15px;font-weight:400;color:#e6e6e6;transform:scaleX(0.8632);">Plastic_Classification</span>
<span class="tx" style="left:180.3px;top:33.0px;font-size:13px;line-height:15px;font-weight:400;color:#e6e6e6;transform:scaleX(1.1034);">/</span>
<span class="tx" style="left:190.0px;top:33.0px;font-size:13px;line-height:15px;font-weight:400;color:#e6e6e6;transform:scaleX(0.8716);">Train</span>
<span class="tx" style="left:220.4px;top:33.0px;font-size:13px;line-height:15px;font-weight:400;color:#e6e6e6;transform:scaleX(1.1034);">/</span>
<span class="tx" style="left:173.0px;top:74.0px;font-size:16.5px;line-height:18px;font-weight:700;color:#e8e8e8;transform:scaleX(1.0802);">Train</span>
<span class="tx" style="left:173.0px;top:98.0px;font-size:9.6px;line-height:11px;font-weight:400;color:#e8e8e8;transform:scaleX(1.0071);">2022-02-01 11:00:16</span>
<span class="tx" style="left:72.0px;top:1006.0px;font-size:12px;line-height:14px;font-weight:400;color:#e6e6e6;transform:scaleX(0.9914);">Duplicate</span>
<span class="tx" style="left:134.0px;top:1006.0px;font-size:12px;line-height:14px;font-weight:400;color:#e6e6e6;transform:scaleX(0.9757);">Remove</span>
<span class="tx" style="left:190.0px;top:1006.0px;font-size:12px;line-height:14px;font-weight:400;color:#e6e6e6;transform:scaleX(0.9781);">Move</span>
<span class="tx" style="left:577.5px;top:38.0px;font-size:14px;line-height:16px;font-weight:400;color:#fff;transform:scaleX(0.9472);">Table</span>
<span class="tx" style="left:691.2px;top:38.0px;font-size:14px;line-height:16px;font-weight:400;color:#e0e0e0;transform:scaleX(0.9424);">Pixel Explore</span>
<span class="tx" style="left:828.0px;top:38.0px;font-size:14px;line-height:16px;font-weight:400;color:#e0e0e0;transform:scaleX(0.9459);">Analyse Tree</span>
<span class="tx" style="left:970.3px;top:38.0px;font-size:14px;line-height:16px;font-weight:400;color:#e0e0e0;transform:scaleX(0.9316);">References</span>
<span class="tx" style="left:1091.9px;top:38.0px;font-size:14px;line-height:16px;font-weight:400;color:#e0e0e0;transform:scaleX(1.0576);">Import / Export</span>
<span class="tx" style="left:1250.2px;top:38.0px;font-size:14px;line-height:16px;font-weight:400;color:#e0e0e0;transform:scaleX(0.9507);">Metadata</span>
<span class="tx" style="left:1381.0px;top:38.0px;font-size:14px;line-height:16px;font-weight:400;color:#e0e0e0;transform:scaleX(0.9943);">Comments</span>
<span class="tx" style="left:1515.4px;top:38.0px;font-size:14px;line-height:16px;font-weight:400;color:#e0e0e0;transform:scaleX(0.9519);">Notifications</span>
<span class="tx" style="left:511.0px;top:74.0px;font-size:13.5px;line-height:15px;font-weight:400;color:#b4b4b4;transform:scaleX(0.9585);">Original</span>
<span class="tx" style="left:840.0px;top:74.0px;font-size:14.5px;line-height:16px;font-weight:400;color:#e6e6e6;transform:scaleX(0.9258);">Identifier</span>
<span class="tx" style="left:860.5px;top:110.0px;font-size:14.5px;line-height:16px;font-weight:400;color:#e6e6e6;transform:scaleX(0.8918);">Name</span>
<span class="tx" style="left:911.4px;top:110.0px;font-size:14.5px;line-height:16px;font-weight:400;color:#e6e6e6;transform:scaleX(0.9077);">Train</span>
<span class="tx" style="left:840.0px;top:146.0px;font-size:14.5px;line-height:16px;font-weight:400;color:#e6e6e6;transform:scaleX(0.8862);">Samples</span>
<span class="tx" style="left:977.0px;top:181.0px;font-size:14px;line-height:16px;font-weight:700;color:#e6e6e6;transform:scaleX(1.0038);">Sample</span>
<span class="tx" style="left:1325.0px;top:181.0px;font-size:14.5px;line-height:16px;font-weight:400;color:#e6e6e6;transform:scaleX(0.9426);">Group</span>
<span class="tx" style="left:1667.0px;top:181.0px;font-size:14.5px;line-height:16px;font-weight:400;color:#e6e6e6;transform:scaleX(0.9426);">Image</span>
<span class="tx" style="left:996.0px;top:220.0px;font-size:14.5px;line-height:16px;font-weight:400;color:#f0f0f0;transform:scaleX(0.9231);">Train</span>
<span class="tx" style="left:1338.8px;top:220.0px;font-size:14.5px;line-height:16px;font-weight:400;color:#f0f0f0;transform:scaleX(0.8923);">Train</span>
<span class="tx" style="left:840.0px;top:932.0px;font-size:14.5px;line-height:16px;font-weight:400;color:#e6e6e6;transform:scaleX(0.9465);">Segmentation</span>
<span class="tx" style="left:941.0px;top:932.0px;font-size:14.5px;line-height:16px;font-weight:400;color:#9c9c9c;transform:scaleX(0.9204);">Measurement</span>
<span class="tx" style="left:512.0px;top:1006.0px;font-size:12px;line-height:14px;font-weight:400;color:#e6e6e6;transform:scaleX(1.0080);">Add Sample model</span>
<span class="tx" style="left:626.0px;top:1006.0px;font-size:12px;line-height:14px;font-weight:400;color:#e6e6e6;transform:scaleX(1.0266);">Add Variable or Id</span>
<span class="tx" style="left:750.3px;top:1006.0px;font-size:12px;line-height:14px;font-weight:400;color:#e6e6e6;transform:scaleX(0.9817);">Apply Changes</span>
<span class="tx" style="left:856.5px;top:1006.0px;font-size:12px;line-height:14px;font-weight:400;color:#e6e6e6;transform:scaleX(0.9952);">Open in Evince</span>
<span class="tx" style="left:1833.3px;top:1005.0px;font-size:12.5px;line-height:14px;font-weight:400;color:#fff;transform:scaleX(0.9471);">Recorder</span>
<div class="a" style="left:0;top:104px;width:60px;height:100px"><span class="a" style="left:31px;top:50px;white-space:pre;font-weight:400;-webkit-text-stroke:0.5px #fff;font-size:27px;line-height:30px;color:#fff;transform:translate(-50%,-50%) rotate(-90deg) scaleX(0.94)">Analyzer</span></div>
</body></html>
